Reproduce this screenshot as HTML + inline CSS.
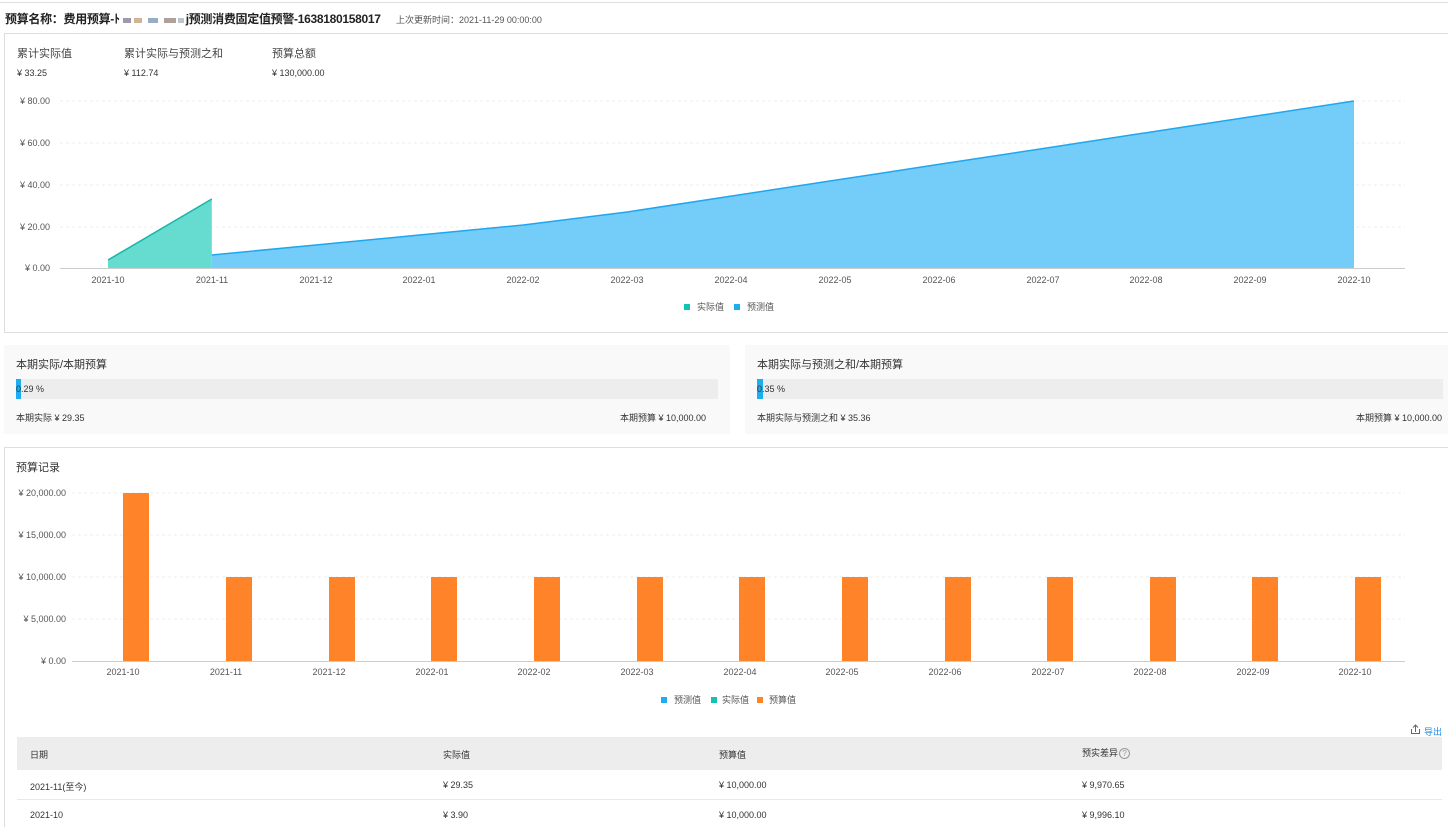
<!DOCTYPE html>
<html><head><meta charset="utf-8"><style>
*{margin:0;padding:0;box-sizing:border-box}
body{width:1448px;height:820px;overflow:hidden;background:#fff;font-family:"Liberation Sans","Noto Sans CJK SC",sans-serif;color:#333;position:relative}
.a{position:absolute;white-space:nowrap}
.t{font-size:9px;color:#555}
.bl{display:inline-block;height:5px;vertical-align:middle;background:#a9b6c4;opacity:.8}
</style></head><body>
<div class="a" style="left:0;top:2px;width:1448px;border-top:1px solid #ddd"></div>
<div class="a" style="left:5px;top:10px;font-size:12px;font-weight:bold;color:#222;letter-spacing:-0.3px">预算名称：费用预算-ﾄ<span style="display:inline-block;width:66px;vertical-align:middle"><span class="bl" style="width:8px;margin-left:3px;background:#8a7f95"></span><span class="bl" style="width:8px;margin-left:3px;background:#c9a07a"></span><span class="bl" style="width:10px;margin-left:6px;background:#7a99b8"></span><span class="bl" style="width:12px;margin-left:6px;background:#9b8a80"></span><span class="bl" style="width:6px;margin-left:2px"></span></span>j预测消费固定值预警-1638180158017</div>
<div class="a t" style="left:396px;top:13px;color:#555">上次更新时间：2021-11-29 00:00:00</div>

<div class="a" style="left:4px;top:33px;width:1450px;height:300px;border:1px solid #ddd"></div>
<div class="a" style="left:17px;top:45px;font-size:11px;color:#444">累计实际值</div>
<div class="a" style="left:124px;top:45px;font-size:11px;color:#444">累计实际与预测之和</div>
<div class="a" style="left:272px;top:45px;font-size:11px;color:#444">预算总额</div>
<div class="a t" style="left:17px;top:68px;color:#333">¥ 33.25</div>
<div class="a t" style="left:124px;top:68px;color:#333">¥ 112.74</div>
<div class="a t" style="left:272px;top:68px;color:#333">¥ 130,000.00</div>

<svg class="a" style="left:0;top:0" width="1448" height="820" font-family="Liberation Sans" font-size="9" fill="#555">
<g stroke="#eee" stroke-dasharray="3,3"><line x1="60" y1="101" x2="1405" y2="101"/><line x1="60" y1="143" x2="1405" y2="143"/><line x1="60" y1="185" x2="1405" y2="185"/><line x1="60" y1="227" x2="1405" y2="227"/></g>
<g text-anchor="end"><text x="50" y="104">¥ 80.00</text><text x="50" y="146">¥ 60.00</text><text x="50" y="188">¥ 40.00</text><text x="50" y="230">¥ 20.00</text><text x="50" y="271">¥ 0.00</text></g>
<polygon points="108,268 108,260 211.8,199 211.8,268" fill="#66dbd0"/>
<polyline points="108,260 211.8,199" stroke="#13b8a8" stroke-width="1.5" fill="none"/>
<polygon points="211.8,268 211.8,255 315.7,245 419.5,235 523.3,225 627.2,212 731,196.1 834.8,180.3 938.6,164.4 1042.5,148.6 1146.3,132.7 1250.1,116.9 1354,101 1354,268" fill="#73cdf8"/>
<polyline points="211.8,255 315.7,245 419.5,235 523.3,225 627.2,212 731,196.1 834.8,180.3 938.6,164.4 1042.5,148.6 1146.3,132.7 1250.1,116.9 1354,101" stroke="#1ea7f0" stroke-width="1.5" fill="none"/>
<line x1="60" y1="268.5" x2="1405" y2="268.5" stroke="#ccc"/>
<g text-anchor="middle"><text x="108" y="283">2021-10</text><text x="212" y="283">2021-11</text><text x="316" y="283">2021-12</text><text x="419" y="283">2022-01</text><text x="523" y="283">2022-02</text><text x="627" y="283">2022-03</text><text x="731" y="283">2022-04</text><text x="835" y="283">2022-05</text><text x="939" y="283">2022-06</text><text x="1043" y="283">2022-07</text><text x="1146" y="283">2022-08</text><text x="1250" y="283">2022-09</text><text x="1354" y="283">2022-10</text></g>
<rect x="684" y="304" width="6" height="6" fill="#13c2b0"/><text x="697" y="310">实际值</text>
<rect x="734" y="304" width="6" height="6" fill="#1eaef0"/><text x="747" y="310">预测值</text>

<g stroke="#eee" stroke-dasharray="3,3"><line x1="72" y1="493" x2="1405" y2="493"/><line x1="72" y1="535" x2="1405" y2="535"/><line x1="72" y1="577" x2="1405" y2="577"/><line x1="72" y1="619" x2="1405" y2="619"/></g>
<g text-anchor="end"><text x="66" y="496">¥ 20,000.00</text><text x="66" y="538">¥ 15,000.00</text><text x="66" y="580">¥ 10,000.00</text><text x="66" y="622">¥ 5,000.00</text><text x="66" y="664">¥ 0.00</text></g>
<g fill="#ff8429"><rect x="123" y="493" width="26" height="168"/><rect x="226" y="577" width="26" height="84"/><rect x="329" y="577" width="26" height="84"/><rect x="431" y="577" width="26" height="84"/><rect x="534" y="577" width="26" height="84"/><rect x="637" y="577" width="26" height="84"/><rect x="739" y="577" width="26" height="84"/><rect x="842" y="577" width="26" height="84"/><rect x="945" y="577" width="26" height="84"/><rect x="1047" y="577" width="26" height="84"/><rect x="1150" y="577" width="26" height="84"/><rect x="1252" y="577" width="26" height="84"/><rect x="1355" y="577" width="26" height="84"/></g>
<line x1="72" y1="661.5" x2="1405" y2="661.5" stroke="#ccc"/>
<g text-anchor="middle"><text x="123" y="675">2021-10</text><text x="226" y="675">2021-11</text><text x="329" y="675">2021-12</text><text x="432" y="675">2022-01</text><text x="534" y="675">2022-02</text><text x="637" y="675">2022-03</text><text x="740" y="675">2022-04</text><text x="842" y="675">2022-05</text><text x="945" y="675">2022-06</text><text x="1048" y="675">2022-07</text><text x="1150" y="675">2022-08</text><text x="1253" y="675">2022-09</text><text x="1355" y="675">2022-10</text></g>
<rect x="661" y="697" width="6" height="6" fill="#1eaef0"/><text x="674" y="703">预测值</text>
<rect x="711" y="697" width="6" height="6" fill="#13c2b0"/><text x="722" y="703">实际值</text>
<rect x="757" y="697" width="6" height="6" fill="#ff8429"/><text x="769" y="703">预算值</text>
<g stroke="#666" fill="none" stroke-width="1"><path d="M1411.5 729v4.5h8V729"/><path d="M1415.5 732V725M1413 727.5l2.5-2.5 2.5 2.5"/></g>
</svg>

<div class="a" style="left:4px;top:345px;width:726px;height:89px;background:#f9f9f9"></div>
<div class="a" style="left:745px;top:345px;width:703px;height:89px;background:#f9f9f9"></div>
<div class="a" style="left:16px;top:356px;font-size:11px;color:#333">本期实际/本期预算</div>
<div class="a" style="left:16px;top:379px;width:702px;height:20px;background:#ededed"><div style="width:5px;height:20px;background:#1eaef0"></div></div>
<div class="a t" style="left:16px;top:384px;color:#333">0.29 %</div>
<div class="a t" style="left:16px;top:411px;color:#333">本期实际 ¥ 29.35</div>
<div class="a t" style="left:620px;top:411px;color:#333">本期预算 ¥ 10,000.00</div>
<div class="a" style="left:757px;top:356px;font-size:11px;color:#333">本期实际与预测之和/本期预算</div>
<div class="a" style="left:757px;top:379px;width:686px;height:20px;background:#ededed"><div style="width:6px;height:20px;background:#1eaef0"></div></div>
<div class="a t" style="left:757px;top:384px;color:#333">0.35 %</div>
<div class="a t" style="left:757px;top:411px;color:#333">本期实际与预测之和 ¥ 35.36</div>
<div class="a t" style="left:1356px;top:411px;color:#333">本期预算 ¥ 10,000.00</div>

<div class="a" style="left:4px;top:447px;width:1450px;height:380px;border:1px solid #ddd;border-bottom:none"></div>
<div class="a" style="left:16px;top:459px;font-size:11px;color:#333">预算记录</div>

<div class="a t" style="left:1424px;top:725px;color:#1e88e5">导出</div>
<div class="a" style="left:17px;top:737px;width:1425px;height:33px;background:#ededed"></div>
<div class="a t" style="left:30px;top:748px;color:#333">日期</div>
<div class="a t" style="left:443px;top:748px;color:#333">实际值</div>
<div class="a t" style="left:719px;top:748px;color:#333">预算值</div>
<div class="a t" style="left:1082px;top:746px;color:#333">预实差异<span style="display:inline-block;width:11px;height:11px;border:1px solid #999;border-radius:50%;font-size:8px;text-align:center;line-height:9px;color:#999;margin-left:1px">?</span></div>
<div class="a t" style="left:30px;top:780px;color:#333">2021-11(至今)</div>
<div class="a t" style="left:443px;top:780px;color:#333">¥ 29.35</div>
<div class="a t" style="left:719px;top:780px;color:#333">¥ 10,000.00</div>
<div class="a t" style="left:1082px;top:780px;color:#333">¥ 9,970.65</div>
<div class="a" style="left:17px;top:799px;width:1425px;border-top:1px solid #e8e8e8"></div>
<div class="a t" style="left:30px;top:810px;color:#333">2021-10</div>
<div class="a t" style="left:443px;top:810px;color:#333">¥ 3.90</div>
<div class="a t" style="left:719px;top:810px;color:#333">¥ 10,000.00</div>
<div class="a t" style="left:1082px;top:810px;color:#333">¥ 9,996.10</div>
</body></html>
